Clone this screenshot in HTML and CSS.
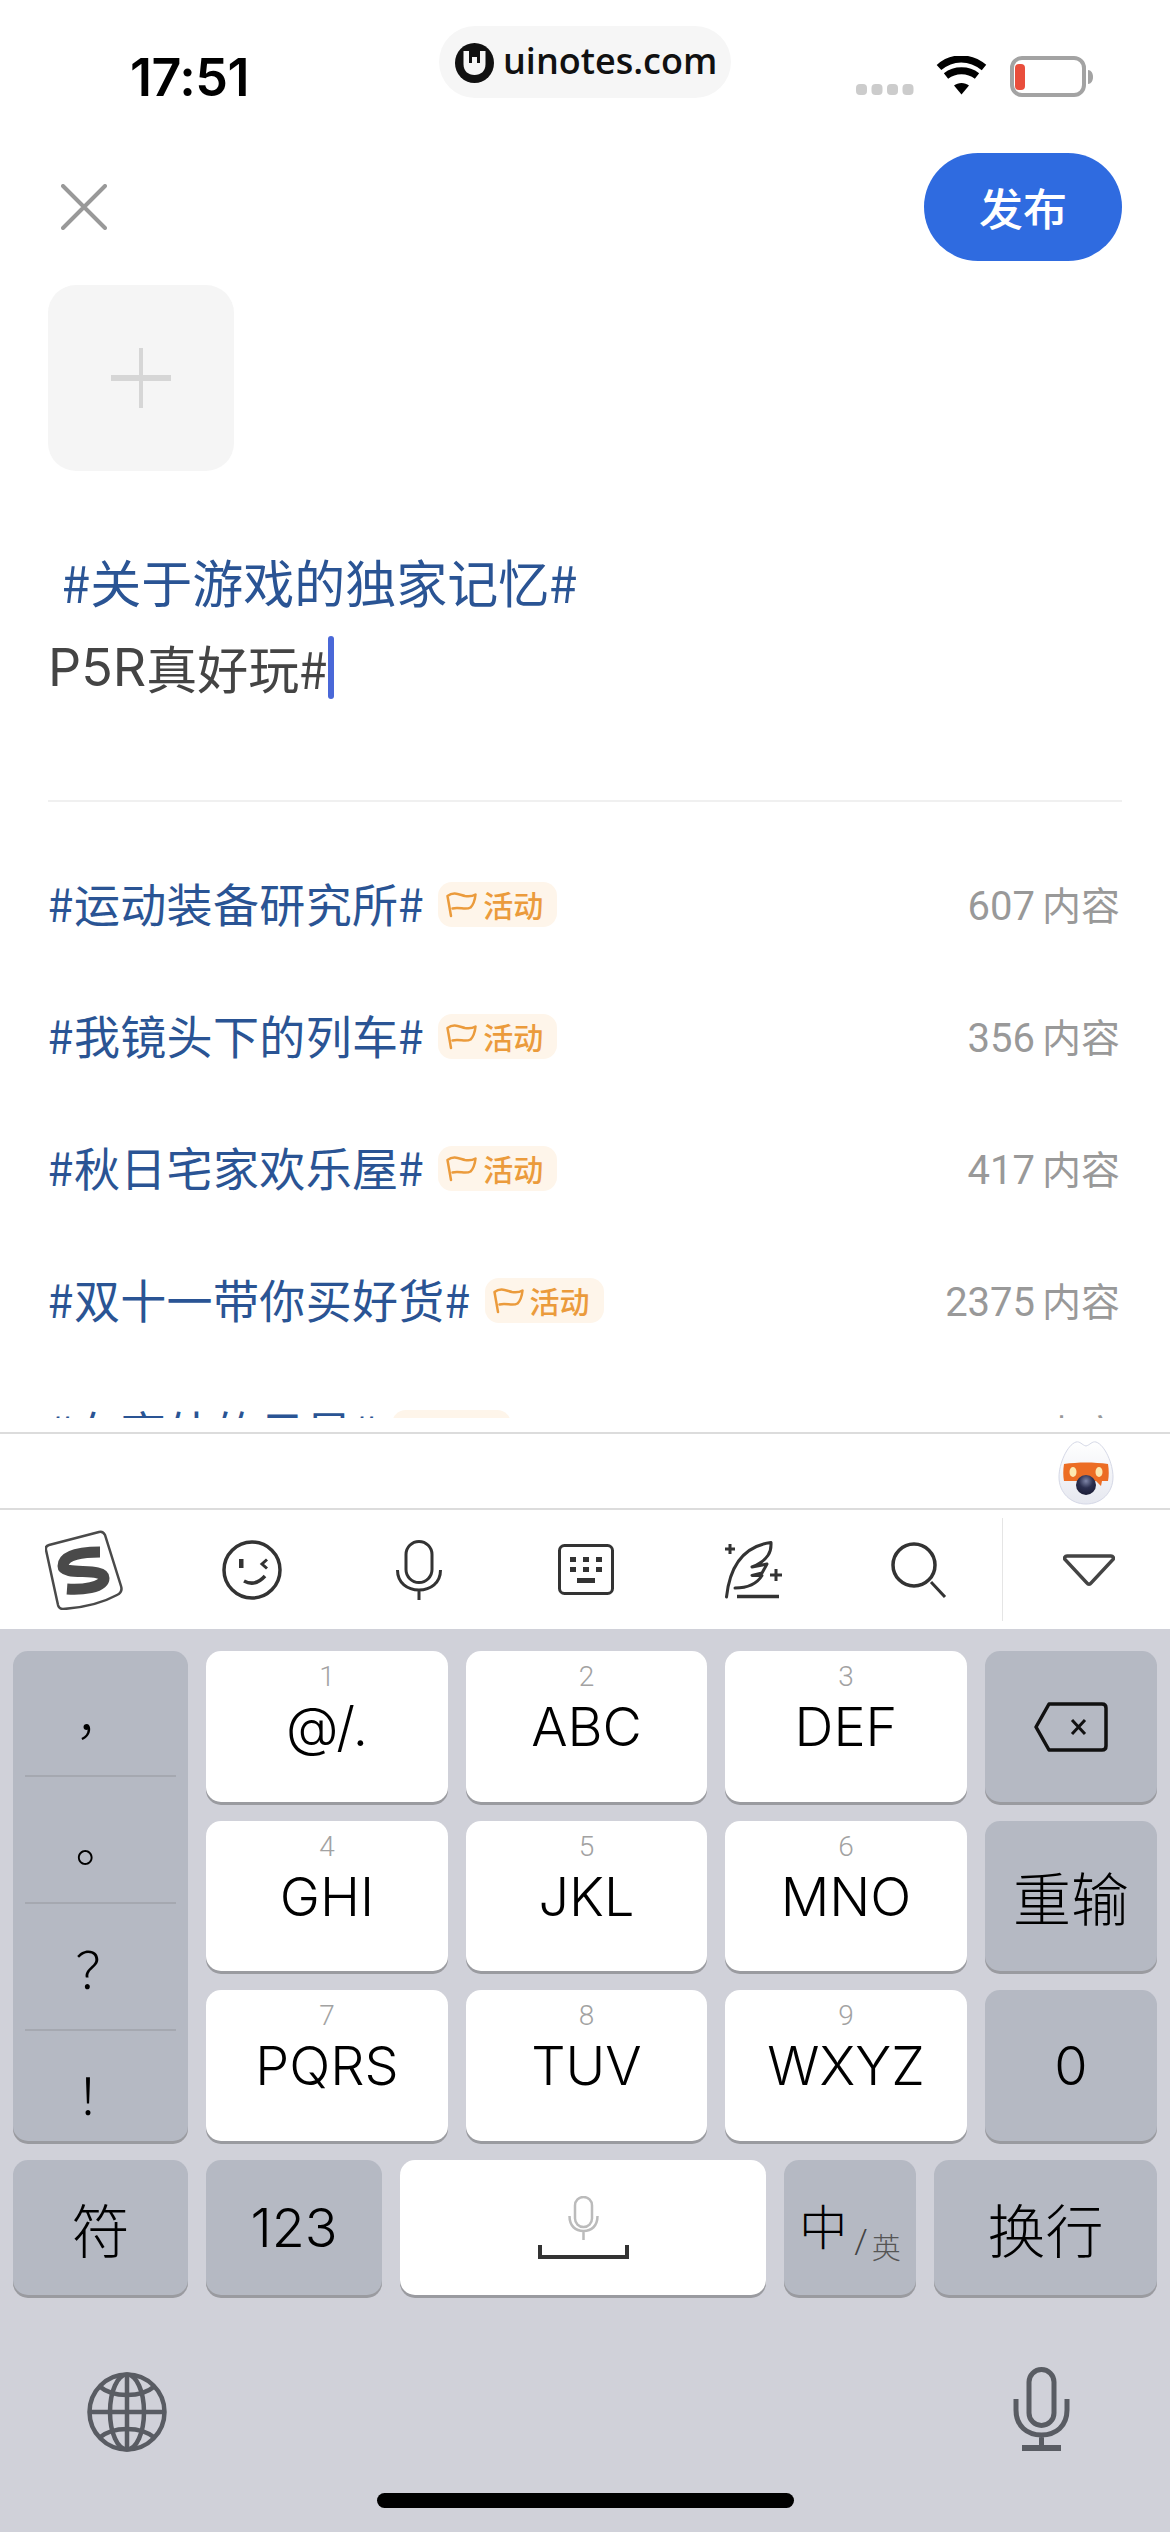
FILE: index.html
```html
<!DOCTYPE html>
<html lang="zh-CN">
<head>
  <meta charset="UTF-8" />
  <meta name="viewport" content="width=device-width, initial-scale=1.0"/>
  <title>发布</title>
  <link rel="stylesheet" href="styles.css">
</head>
<body>
  <div class="status">
    <div class="time">17:51</div>
    <div class="pill">
      <svg class="pill-logo" width="39" height="40" viewBox="0 0 39 40">
        <ellipse cx="19.5" cy="20" rx="19.5" ry="20" fill="#111"/>
        <path d="M8.500 8h22v13c0 7-4.500 11-11 11s-11-4-11-11z" fill="#f6f6f6"/>
        <path d="M14 8h11v12l-3 0v-6h-5v6h-3z" fill="#111"/>
      </svg>
      <span class="pill-text">uinotes.com</span>
    </div>
    <svg class="status-icons" width="238" height="42" viewBox="0 0 238 42">
      <rect x="0" y="28" width="11" height="11" rx="4" fill="#ccc"/>
      <rect x="15.500" y="28" width="11" height="11" rx="4" fill="#ccc"/>
      <rect x="31" y="28" width="11" height="11" rx="4" fill="#ccc"/>
      <rect x="46.500" y="28" width="11" height="11" rx="4" fill="#ccc"/>
      <path d="M83 11.500c13-11.500 31-11.500 45 0" fill="none" stroke="#000" stroke-width="7"/>
      <path d="M90 20c9-7 22-7 31 0" fill="none" stroke="#000" stroke-width="7"/>
      <path d="M98 29.500c4-3.500 11-3.500 15 0l-7.500 9z" fill="#000"/>
      <rect x="156" y="2" width="72" height="37" rx="10" fill="#fff" stroke="#a3a3a3" stroke-width="4"/>
      <rect x="159" y="8" width="10" height="26" rx="4" fill="#e94e3c"/>
      <path d="M232 14c3 0 5 3 5 7s-2 7-5 7z" fill="#a3a3a3"/>
    </svg>
  </div>

  <div class="top">
    <svg class="close" width="46" height="46" viewBox="0 0 46 46">
      <path d="M2 2l42 42M44 2L2 44" stroke="#999" stroke-width="4" stroke-linecap="round"/>
    </svg>
    <button class="publish">发布</button>
  </div>

  <div class="add-tile">
    <svg width="60" height="60" viewBox="0 0 60 60">
      <path d="M30 0v60" stroke="#d6d6d6" stroke-width="4" stroke-linecap="round"/>
      <path d="M0 30h60" stroke="#d6d6d6" stroke-width="6" stroke-linecap="round"/>
    </svg>
  </div>

  <div class="composer">
    <div class="topic-line">#关于游戏的独家记忆#</div>
    <div class="input-line"><span class="latin-run">P5R</span>真好玩#<span class="caret"></span></div>
  </div>

  <div class="topics">
    <div class="row">
      <span class="tag">#运动装备研究所#</span>
      <span class="badge">
        <svg width="31" height="27" viewBox="0 0 31 27"><path d="M5 25L1.500 5C8 0 14 4 19 5c4 .5 8 0 10.500-1.500-.5 5-2 10-5 13-5 3-11-1-18 1" fill="none" stroke="#eb9b3c" stroke-width="2.500" stroke-linecap="round" stroke-linejoin="round"/></svg>
        活动
      </span>
      <span class="count">607 <b>内容</b></span>
    </div>
    <div class="row">
      <span class="tag">#我镜头下的列车#</span>
      <span class="badge">
        <svg width="31" height="27" viewBox="0 0 31 27"><path d="M5 25L1.500 5C8 0 14 4 19 5c4 .5 8 0 10.500-1.500-.5 5-2 10-5 13-5 3-11-1-18 1" fill="none" stroke="#eb9b3c" stroke-width="2.500" stroke-linecap="round" stroke-linejoin="round"/></svg>
        活动
      </span>
      <span class="count">356 <b>内容</b></span>
    </div>
    <div class="row">
      <span class="tag">#秋日宅家欢乐屋#</span>
      <span class="badge">
        <svg width="31" height="27" viewBox="0 0 31 27"><path d="M5 25L1.500 5C8 0 14 4 19 5c4 .5 8 0 10.500-1.500-.5 5-2 10-5 13-5 3-11-1-18 1" fill="none" stroke="#eb9b3c" stroke-width="2.500" stroke-linecap="round" stroke-linejoin="round"/></svg>
        活动
      </span>
      <span class="count">417 <b>内容</b></span>
    </div>
    <div class="row">
      <span class="tag">#双十一带你买好货#</span>
      <span class="badge">
        <svg width="31" height="27" viewBox="0 0 31 27"><path d="M5 25L1.500 5C8 0 14 4 19 5c4 .5 8 0 10.500-1.500-.5 5-2 10-5 13-5 3-11-1-18 1" fill="none" stroke="#eb9b3c" stroke-width="2.500" stroke-linecap="round" stroke-linejoin="round"/></svg>
        活动
      </span>
      <span class="count">2375 <b>内容</b></span>
    </div>
    <div class="row">
      <span class="tag">#在室外的日星#</span>
      <span class="badge">
        <svg width="31" height="27" viewBox="0 0 31 27"><path d="M5 25L1.500 5C8 0 14 4 19 5c4 .5 8 0 10.500-1.500-.5 5-2 10-5 13-5 3-11-1-18 1" fill="none" stroke="#eb9b3c" stroke-width="2.500" stroke-linecap="round" stroke-linejoin="round"/></svg>
        活动
      </span>
      <span class="count">1283 <b>内容</b></span>
    </div>
  </div>

  <div class="mascot-strip">
    <svg width="56" height="64" viewBox="0 0 56 64">
      <defs>
        <linearGradient id="egg" x1="0" y1="0" x2="0" y2="1">
          <stop offset="0" stop-color="#fff"/>
          <stop offset="1" stop-color="#e6e8f0"/>
        </linearGradient>
        <radialGradient id="ball" cx="0.5" cy="0.3" r="0.7">
          <stop offset="0" stop-color="#7f86a8"/>
          <stop offset="0.5" stop-color="#2c3050"/>
          <stop offset="1" stop-color="#1b1d36"/>
        </radialGradient>
      </defs>
      <path d="M28 5c4-1 6-5 10-4 9 3 17 22 17 35 0 16-12 27-27 27S1 52 1 36C1 23 9 4 18 1c4-1 6 3 10 4z" fill="url(#egg)" stroke="#d5d8e6" stroke-width="1"/>
      <path d="M6 23c14-2 30-2 44 0 1 6 1 12 0 17h-6l-1 5-5-5H6c-1-5-1-11 0-17z" fill="#ec6d24"/>
      <ellipse cx="15" cy="31" rx="3.500" ry="5" fill="#fde9b0"/>
      <ellipse cx="41" cy="31" rx="3.500" ry="5" fill="#fde9b0"/>
      <circle cx="28" cy="44" r="10" fill="url(#ball)"/>
    </svg>
  </div>

  <div class="toolbar">
    <svg class="tb-sogou" width="79" height="80" viewBox="0 0 79 80">
      <path d="M4 15L54 2Q58 1 60 5L76 56Q78 62 72 65Q50 77 18 79Q14 79 13 75L1 20Q0 16 4 15Z" fill="none" stroke="#4a4a4a" stroke-width="2.500"/>
      <path d="M55 22C40 22 18 24 18 36C18 46 59 37 59 48C59 58 36 60 22 59" fill="none" stroke="#4a4a4a" stroke-width="11"/>
    </svg>
    <svg class="tb-smile" width="60" height="60" viewBox="0 0 60 60">
      <circle cx="30" cy="30" r="28" fill="none" stroke="#333" stroke-width="3.500"/>
      <rect x="17" y="19" width="4.500" height="9" fill="#333"/>
      <path d="M45 19.500l-5 4.500 5 4.500" fill="none" stroke="#333" stroke-width="3"/>
      <path d="M22 41Q33 47 43 36" fill="none" stroke="#333" stroke-width="3.500"/>
    </svg>
    <svg class="tb-mic" width="46" height="60" viewBox="0 0 46 60">
      <rect x="10" y="1.500" width="26" height="41" rx="13" fill="none" stroke="#333" stroke-width="3"/>
      <path d="M1.500 30c0 13 10 20 21.500 20s21.500-7 21.500-20M23 50v10" fill="none" stroke="#333" stroke-width="3"/>
    </svg>
    <svg class="tb-keys" width="56" height="51" viewBox="0 0 56 51">
      <rect x="1.500" y="1.500" width="53" height="48" rx="5" fill="none" stroke="#333" stroke-width="3"/>
      <path d="M12 13h6v5h-6zM25 13h6v5h-6zM38 13h6v5h-6zM12 23h6v5h-6zM25 23h6v5h-6zM38 23h6v5h-6zM19 34h18v5H19z" fill="#333"/>
    </svg>
    <svg class="tb-feather" width="58" height="58" viewBox="0 0 58 58">
      <path d="M2.500 56C5 33 14 6 47 1.500C47.500 10 45 19 28 26L43 23L38 32L28 34.500L38 34.500C34 41 26 47 11 47" fill="none" stroke="#333" stroke-width="3" stroke-linecap="round" stroke-linejoin="round"/>
      <path d="M6 3v10M1 8h10M52 28v12M46 34h12" stroke="#333" stroke-width="3"/>
      <path d="M13 55.500h42" stroke="#333" stroke-width="3.500"/>
    </svg>
    <svg class="tb-search" width="56" height="56" viewBox="0 0 56 56">
      <circle cx="23" cy="23" r="21" fill="none" stroke="#333" stroke-width="3.500"/>
      <path d="M40 40l14 15" stroke="#333" stroke-width="3"/>
    </svg>
    <div class="tb-divider"></div>
    <svg class="tb-hide" width="52" height="32" viewBox="0 0 52 32">
      <path d="M4 2h44c2 0 3 2 2 3.500L28 29c-1 1.500-3 1.500-4 0L2 5.500C1 4 2 2 4 2z" fill="none" stroke="#444" stroke-width="3.500"/>
    </svg>
  </div>

  <div class="keyboard">
    <div class="keys">
      <div class="key dark punct">
        <div class="punct-cell">，</div>
        <div class="punct-cell">。</div>
        <div class="punct-cell">？</div>
        <div class="punct-cell">！</div>
      </div>
      <div class="key"><span class="num">1</span><span class="letters">@/.</span></div>
      <div class="key"><span class="num">2</span><span class="letters">ABC</span></div>
      <div class="key"><span class="num">3</span><span class="letters">DEF</span></div>
      <div class="key dark center">
        <svg width="74" height="50" viewBox="0 0 74 50">
          <path d="M15 2H68Q72 2 72 6V44Q72 48 68 48H15L2 25Z" fill="none" stroke="#111" stroke-width="3.500" stroke-linejoin="round"/>
          <path d="M38 18l13 14M51 18L38 32" stroke="#111" stroke-width="3"/>
        </svg>
      </div>
      <div class="key"><span class="num">4</span><span class="letters">GHI</span></div>
      <div class="key"><span class="num">5</span><span class="letters">JKL</span></div>
      <div class="key"><span class="num">6</span><span class="letters">MNO</span></div>
      <div class="key dark center cjk">重输</div>
      <div class="key"><span class="num">7</span><span class="letters">PQRS</span></div>
      <div class="key"><span class="num">8</span><span class="letters">TUV</span></div>
      <div class="key"><span class="num">9</span><span class="letters">WXYZ</span></div>
      <div class="key dark center latin">0</div>
    </div>

    <div class="bottom-keys">
      <div class="key dark center cjk k-sym">符</div>
      <div class="key dark center latin k-123">123</div>
      <div class="key center k-space">
        <svg width="31" height="44" viewBox="0 0 31 44">
          <rect x="7" y="1" width="17" height="30" rx="8.500" fill="none" stroke="#bbb" stroke-width="2.500"/>
          <path d="M1.500 20c0 10 6 15 14 15s14-5 14-15M15.500 35v9" fill="none" stroke="#bbb" stroke-width="2.500"/>
        </svg>
        <svg width="91" height="14" viewBox="0 0 91 14">
          <path d="M2 0v12h87V0" fill="none" stroke="#333" stroke-width="4"/>
        </svg>
      </div>
      <div class="key dark center k-lang"><span class="lang-main">中</span><span class="lang-slash">/</span><span class="lang-sub">英</span></div>
      <div class="key dark center cjk k-return">换行</div>
    </div>

    <div class="extras">
      <svg class="globe" width="80" height="80" viewBox="0 0 80 80">
        <g fill="none" stroke="#595c63" stroke-width="4.500">
          <ellipse cx="40" cy="40" rx="37.500" ry="37.500"/>
          <ellipse cx="40" cy="40" rx="17" ry="37.500"/>
          <path d="M40 2v76M2.500 40h75"/>
          <path d="M12 14c14 12 42 12 56 0M12 66c14-12 42-12 56 0"/>
        </g>
      </svg>
      <svg class="big-mic" width="57" height="84" viewBox="0 0 57 84">
        <g fill="none" stroke="#595c63" stroke-width="5">
          <rect x="16" y="2.500" width="25" height="56" rx="12.500"/>
          <path d="M3 32v11c0 16 11 25 25.500 25S54 59 54 43V32M28.500 68v13"/>
        </g>
        <path d="M9 78h39v6H9z" fill="#595c63"/>
      </svg>
    </div>

    <div class="home-bar"></div>
  </div>
</body>
</html>
```

FILE: styles.css
```css
* {
  box-sizing: border-box;
}

html, body {
  margin: 0;
  padding: 0;
}

body {
  width: 1170px;
  height: 2532px;
  overflow: hidden;
  background: #fff;
  font-family: 'Noto Sans CJK SC', sans-serif;
  color: #000;
}

svg {
  display: block;
  flex: none;
}

.status {
  display: flex;
  height: 120px;
}

.time {
  margin: 48px 0 0 130px;
  width: 118px;
  font-family: Inter, sans-serif;
  font-size: 52px;
  line-height: 60px;
  font-weight: 600;
  letter-spacing: -0.5px;
  white-space: nowrap;
}

.pill {
  display: flex;
  align-items: center;
  gap: 9px;
  margin: 26px 0 0 191px;
  padding: 0 0 0 16px;
  width: 292px;
  height: 72px;
  border-radius: 36px;
  background: #f6f6f6;
}

.pill-logo {
  margin-top: 2px;
}

.pill-text {
  font-family: 'Open Sans', sans-serif;
  font-size: 36px;
  font-weight: 600;
  color: #111;
  margin-top: -4px;
}

.status-icons {
  margin: 56px 0 0 125px;
}

.top {
  display: flex;
  justify-content: space-between;
  align-items: center;
  height: 108px;
  margin-top: 33px;
  padding: 0 48px 0 61px;
}

.publish {
  width: 198px;
  height: 108px;
  border: none;
  border-radius: 54px;
  background: #2f6be0;
  color: #fff;
  font-family: 'Noto Sans CJK SC', sans-serif;
  font-size: 44px;
  font-weight: 500;
}

.add-tile {
  display: flex;
  align-items: center;
  justify-content: center;
  width: 186px;
  height: 186px;
  margin: 24px 0 0 48px;
  border-radius: 28px;
  background: #f5f5f5;
}

.composer {
  height: 262px;
  margin: 69px 48px 0;
  border-bottom: 2px solid #f0f0f0;
  font-size: 51px;
  line-height: 83px;
}

.topic-line {
  margin-bottom: 3px;
  padding-left: 14px;
  color: #2a5494;
}

.input-line {
  display: flex;
  align-items: center;
  color: #444;
}

.latin-run {
  font-family: Inter, sans-serif;
  font-size: 52px;
}

.caret {
  width: 6px;
  height: 63px;
  border-radius: 3px;
  background: #4a68d8;
}

.topics {
  height: 616px;
  padding-top: 36px;
  overflow: hidden;
}

.row {
  display: flex;
  align-items: center;
  height: 132px;
  padding: 0 50px 0 48px;
}

.tag {
  margin-top: -5px;
  color: #2a5494;
  font-size: 46px;
  letter-spacing: 0.35px;
}

.badge {
  display: flex;
  align-items: center;
  gap: 6px;
  height: 45px;
  margin-left: 14px;
  padding: 0 14px 0 8px;
  border-radius: 14px;
  background: #fef5ea;
  color: #eb9b3c;
  font-size: 30px;
  font-weight: 500;
}

.count {
  margin-left: auto;
  margin-top: -3px;
  color: #999;
  font-family: Roboto, sans-serif;
  font-size: 40px;
  word-spacing: -3px;
}

.count b {
  font-family: 'Noto Sans CJK SC', sans-serif;
  font-size: 39px;
  font-weight: 400;
}

.mascot-strip {
  display: flex;
  justify-content: flex-end;
  height: 78px;
  margin-top: 14px;
  padding: 7px 56px 0 0;
  border-top: 2px solid #dcdcdc;
  border-bottom: 2px solid #dcdcdc;
}

.toolbar {
  display: flex;
  align-items: center;
  height: 119px;
  padding-left: 45px;
}

.tb-smile { margin-left: 98px; }
.tb-mic { margin-left: 114px; }
.tb-keys { margin-left: 116px; }
.tb-feather { margin-left: 110px; }
.tb-search { margin-left: 109px; }
.tb-hide { margin-left: 60px; }

.tb-divider {
  width: 1px;
  height: 103px;
  margin: 0 0 0 55px;
  background: #e5e5e5;
}

.keyboard {
  height: 903px;
  padding: 22px 13px 0;
  background: #d0d1d9;
}

.keys {
  display: grid;
  grid-template-columns: 175px 242px 241px 242px 172px;
  grid-template-rows: 151px 150px 151px;
  column-gap: 18px;
  row-gap: 19px;
}

.key {
  display: flex;
  flex-direction: column;
  align-items: center;
  padding-top: 11px;
  border-radius: 15px;
  background: #fff;
  box-shadow: 0 3px 0 #9a9ba0;
}

.key.dark {
  background: #b5b9c3;
}

.key.center {
  justify-content: center;
  padding-top: 0;
}

.num {
  color: #a2a2a2;
  font-family: Roboto, sans-serif;
  font-size: 28px;
  font-weight: 300;
  line-height: 30px;
}

.letters, .latin {
  font-family: Inter, sans-serif;
  font-size: 54px;
  font-weight: 300;
  line-height: 66px;
}

.letters {
  margin-top: 2px;
}

.cjk {
  font-size: 58px;
  font-weight: 300;
}

.punct {
  grid-row: span 3;
  padding: 0 12px;
  font-size: 50px;
  font-weight: 300;
}

.punct-cell {
  display: flex;
  align-items: center;
  justify-content: center;
  width: 100%;
  height: 127px;
  border-bottom: 2px solid #a5a8b0;
}

.punct-cell:first-child {
  height: 126px;
}

.punct-cell:last-child {
  height: 110px;
  padding-top: 14px;
  border-bottom: none;
}

.bottom-keys {
  display: flex;
  gap: 18px;
  height: 135px;
  margin-top: 19px;
}

.k-sym { width: 175px; }
.k-123 { width: 176px; }
.k-lang { width: 132px; flex-direction: row; }
.k-return { width: 223px; }

.k-space {
  width: 366px;
  gap: 5px;
  padding-top: 0;
}

.lang-main {
  font-size: 48px;
  font-weight: 300;
  margin-top: -8px;
}

.lang-slash {
  margin: 26px 4px 0 7px;
  color: #444;
  font-family: Roboto, sans-serif;
  font-size: 34px;
  font-weight: 300;
}

.lang-sub {
  color: #555;
  font-size: 29px;
  font-weight: 300;
  margin-top: 36px;
}

.extras {
  display: flex;
  justify-content: space-between;
  align-items: flex-start;
  height: 126px;
  margin-top: 72px;
  padding: 0 87px 0 74px;
}

.globe {
  margin-top: 5px;
}

.home-bar {
  width: 417px;
  height: 15px;
  margin: 0 auto;
  border-radius: 8px;
  background: #000;
}
```
